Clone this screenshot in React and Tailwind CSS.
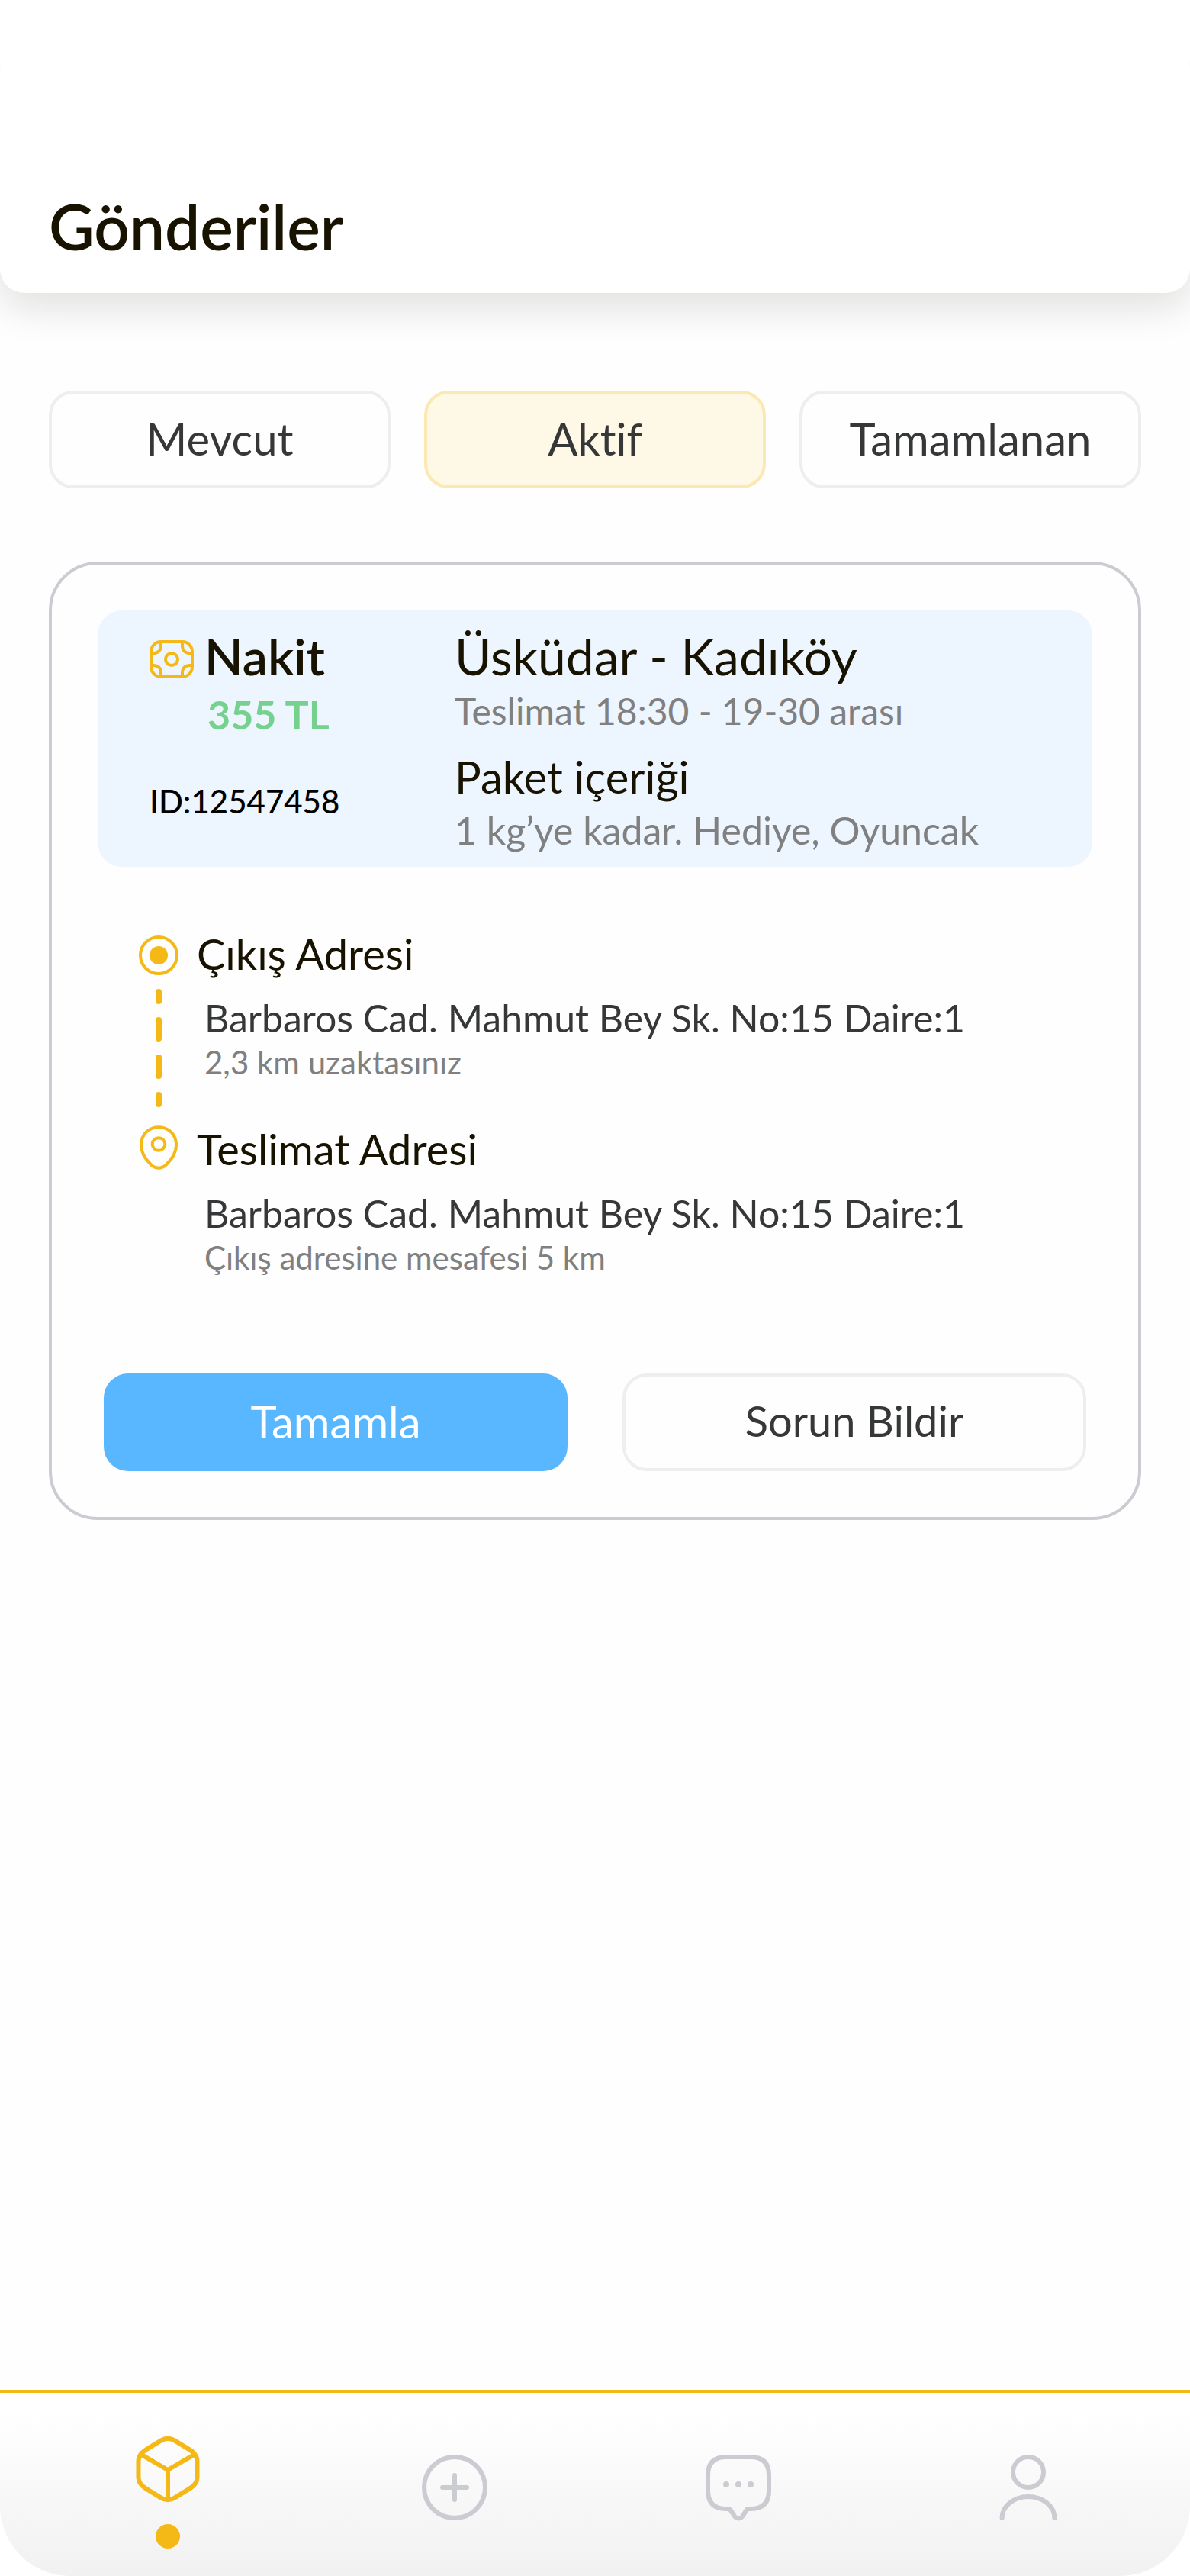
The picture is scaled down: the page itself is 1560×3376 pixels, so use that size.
const TABS = [
  { label: "Mevcut", active: false },
  { label: "Aktif", active: true },
  { label: "Tamamlanan", active: false },
];

function CashIcon() {
  return (
    <svg viewBox="0 0 58 50" fill="none" stroke="currentColor" strokeWidth="4" className="mt-2 h-[50px] w-[58px] shrink-0 text-[#f4b916]" aria-hidden="true">
      <rect x="2" y="2" width="54" height="46" rx="13" />
      <circle cx="29" cy="25" r="8" />
      <path d="M15 2v5c0 6.500-4 10-10 10H2M43 2v5c0 6.500 4 10 10 10h3M15 48v-5c0-6.500-4-10-10-10H2M43 48v-5c0-6.500 4-10 10-10h3" />
    </svg>
  );
}

function OriginIcon() {
  return (
    <svg viewBox="0 0 52 52" className="size-13 shrink-0 text-[#f4b916]" aria-hidden="true">
      <circle cx="26" cy="26" r="24" fill="none" stroke="currentColor" strokeWidth="4" />
      <circle cx="26" cy="26" r="12" fill="currentColor" />
    </svg>
  );
}

function PinIcon() {
  return (
    <svg viewBox="2.25 0 19.5 24" fill="none" stroke="currentColor" strokeWidth="1.5" className="mt-0.5 h-16 w-13 shrink-0 text-[#f4b916]" aria-hidden="true">
      <circle cx="12" cy="10.31" r="3.12" />
      <path d="M3.62 8.49c1.97-8.660 14.8-8.650 16.76.01 1.150 5.080-2.010 9.380-4.780 12.04a5.193 5.193 0 0 1-7.210 0c-2.760-2.660-5.920-6.970-4.770-12.05z" />
    </svg>
  );
}

function NavIcon({ children }) {
  return (
    <svg viewBox="0 0 24 24" fill="none" stroke="currentColor" strokeWidth="1.5" strokeLinecap="round" strokeLinejoin="round" className="size-24" aria-hidden="true">
      {children}
    </svg>
  );
}

function Stop({ marker, title, address, note, last }) {
  return (
    <li className="flex gap-6">
      <div className="flex w-13 flex-col items-center">{marker}</div>
      <div className={last ? "" : "pb-13"}>
        <h3 className="text-[56px] leading-[72px] text-[#181200]">{title}</h3>
        <div className="pl-2.5">
          <p className="mt-4 text-[50px] leading-16 text-[#363738]">{address}</p>
          <p className="text-[42px] leading-[52px] text-[#808080]">{note}</p>
        </div>
      </div>
    </li>
  );
}

export default function App() {
  return (
    <div className="flex min-h-screen flex-col overflow-hidden rounded-[92px] bg-[#fefefe] font-['Lato',sans-serif] [font-variant-ligatures:none]">
      <header className="rounded-b-[32px] bg-white px-16 pt-[248px] pb-10 shadow-[0_20px_50px_rgba(24,18,0,0.12)]">
        <h1 className="text-[82px] leading-24 font-semibold text-[#181200]">Gönderiler</h1>
      </header>

      <main className="flex-1 px-16 pt-32">
        <div className="grid grid-cols-3 gap-11">
          {TABS.map((t) => (
            <button
              key={t.label}
              type="button"
              aria-pressed={t.active}
              className={
                t.active
                  ? "h-32 rounded-[32px] border-4 border-[#fbe8b2] bg-[#fef8e6] pb-1 text-[58px] text-[#363738]"
                  : "h-32 rounded-[32px] border-4 border-[#eeeeed] pb-1 text-[58px] text-[#363738]"
              }
            >
              {t.label}
            </button>
          ))}
        </div>

        <article className="mt-24 rounded-[64px] border-4 border-[#cbcbd2] p-15">
          <section className="grid grid-cols-[468px_1fr] rounded-[32px] bg-[#edf5ff] pt-5 pb-3.5">
            <div className="pl-17">
              <div className="flex items-center gap-3.5">
                <CashIcon />
                <h2 className="text-[66px] leading-20 font-semibold text-[#181200]">Nakit</h2>
              </div>
              <p className="mt-1 pl-19 text-[52px] leading-16 font-bold text-[#76d18f]">355 TL</p>
              <p className="mt-14 text-[42px] leading-[52px] font-medium text-black">ID:12547458</p>
            </div>
            <div>
              <h2 className="text-[66px] leading-20 text-[#181200]">Üsküdar - Kadıköy</h2>
              <p className="text-[48px] leading-16 text-[#808080]">Teslimat 18:30 - 19-30 arası</p>
              <h3 className="mt-[18px] text-[58px] leading-[72px] text-[#181200]">Paket içeriği</h3>
              <p className="text-[50px] leading-[68px] text-[#808080]">1 kg’ye kadar. Hediye, Oyuncak</p>
            </div>
          </section>

          <ol className="mt-[78px] pl-[54px]">
            <Stop
              marker={
                <>
                  <div className="pt-3">
                    <OriginIcon />
                  </div>
                  <div className="flex flex-col gap-[17px] pt-[18px]">
                    <span className="h-5 w-2 rounded-full bg-[#f4b916]" />
                    <span className="h-8 w-2 rounded-full bg-[#f4b916]" />
                    <span className="h-8 w-2 rounded-full bg-[#f4b916]" />
                    <span className="h-5 w-2 rounded-full bg-[#f4b916]" />
                  </div>
                </>
              }
              title="Çıkış Adresi"
              address="Barbaros Cad. Mahmut Bey Sk. No:15 Daire:1"
              note="2,3 km uzaktasınız"
            />
            <Stop
              last
              marker={<PinIcon />}
              title="Teslimat Adresi"
              address="Barbaros Cad. Mahmut Bey Sk. No:15 Daire:1"
              note="Çıkış adresine mesafesi 5 km"
            />
          </ol>

          <div className="mt-[126px] grid grid-cols-2 gap-18 px-2">
            <button type="button" className="h-32 rounded-[32px] bg-[#58b7ff] pb-1 text-[58px] text-white">
              Tamamla
            </button>
            <button type="button" className="h-32 rounded-[32px] border-4 border-[#eeeeed] pb-1 text-[56px] text-[#363738]">
              Sorun Bildir
            </button>
          </div>
        </article>
      </main>

      <nav className="flex items-start justify-between border-t-4 border-[#f4b916] bg-linear-to-b from-white from-10% to-[#f1f1f1] pt-13 pr-41 pb-9 pl-43 text-[#cbcbd2]">
        <button type="button" aria-label="Gönderiler" aria-current="page" className="flex flex-col items-center gap-6 text-[#f4b916]">
          <NavIcon>
            <path d="M9.8 2.600 4.8 5.650C3.300 6.600 2.370 7.700 2.370 9.400v5.200c0 1.700.93 2.800 2.430 3.750l5 3.050c1.400.8 3 .8 4.400 0l5-3.050c1.500-.95 2.430-2.050 2.430-3.750V9.400c0-1.700-.93-2.800-2.430-3.750l-5-3.050c-1.400-.8-3-.8-4.400 0z" />
            <path d="m3.200 7.150 8.800 5.100 8.800-5.100M12 12.250V21.700" />
          </NavIcon>
          <span className="size-8 rounded-full bg-[#f4b916]" />
        </button>
        <button type="button" aria-label="Yeni gönderi" className="mt-6">
          <NavIcon>
            <circle cx="12" cy="12" r="10" />
            <path d="M8 12h8M12 8v8" />
          </NavIcon>
        </button>
        <button type="button" aria-label="Mesajlar" className="mt-6">
          <NavIcon>
            <path d="M7 2h8c4 0 6 2 6 6v5c0 4-2 6-6 6h-.5c-.4 0-.7.2-.9.5l-1.300 2c-.6.8-1.900.8-2.500 0l-1.300-2c-.2-.3-.6-.5-.9-.5H7c-4 0-6-2-6-6V8c0-4 2-6 6-6z" />
            <path strokeWidth="2" d="M7 11h.01M11 11h.01M15 11h.01" />
          </NavIcon>
        </button>
        <button type="button" aria-label="Profil" className="mt-6">
          <NavIcon>
            <circle cx="12" cy="7" r="5" />
            <path d="M20.600 22c0-3.870-3.850-7-8.600-7s-8.600 3.130-8.600 7" />
          </NavIcon>
        </button>
      </nav>
    </div>
  );
}
